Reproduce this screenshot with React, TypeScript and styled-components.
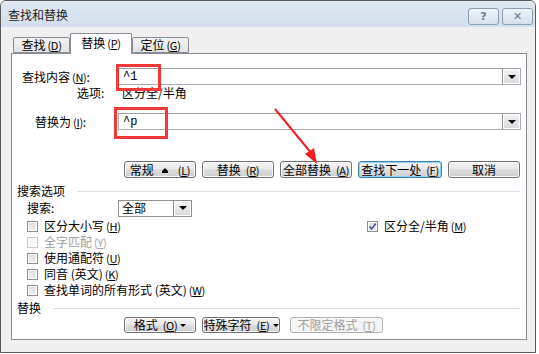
import React from "react";
import styled, { createGlobalStyle } from "styled-components";

const GlobalStyle = createGlobalStyle`
  body {
    margin: 0;
    background: #ffffff;
    font-family: "Noto Sans CJK SC", "Liberation Sans", sans-serif;
    font-size: 12px;
    color: #000;
  }
`;

const Window = styled.div`
  position: relative;
  width: 534px;
  height: 351px;
  border: 1px solid #5b5b5b;
  border-radius: 6px 6px 0 0;
  background: #f0f0f0;
  display: flex;
  flex-direction: column;
  overflow: hidden;
`;

const TitleBar = styled.div`
  height: 26px;
  display: flex;
  align-items: center;
  padding: 0 2px 0 7px;
  background: linear-gradient(#dfe8f3, #d3dfed);
`;

const Title = styled.div`
  flex: 1;
  font-size: 12px;
  color: #1e1e1e;
  line-height: 14px;
  padding-top: 2px;
`;

const CaptionButton = styled.div`
  width: 29px;
  height: 15px;
  margin-left: 3px;
  border: 1px solid #8c9cb0;
  border-radius: 3px;
  background: linear-gradient(#eef3f9, #d6e0ec);
  display: flex;
  align-items: center;
  justify-content: center;
  color: #6b7a8d;
  font-family: "DejaVu Sans", sans-serif;
  font-size: 11px;
  font-weight: bold;
  margin-top: 4px;
`;

const Body = styled.div`
  flex: 1;
  padding: 6px 8px 0 10px;
  display: flex;
  flex-direction: column;
`;

const TabStrip = styled.div`
  display: flex;
  align-items: flex-end;
  height: 20px;
  padding-left: 2px;
  position: relative;
  z-index: 1;
`;

const Tab = styled.div<{ $active?: boolean }>`
  height: ${(p) => (p.$active ? "21px" : "16px")};
  width: ${(p) => (p.$active ? "62px" : "57px")};
  margin-bottom: ${(p) => (p.$active ? "-1px" : "0")};
  border: 1px solid #898c95;
  border-bottom: ${(p) => (p.$active ? "none" : "1px solid #898c95")};
  border-radius: 2px 2px 0 0;
  background: ${(p) =>
    p.$active ? "#ffffff" : "linear-gradient(#f3f3f3, #e3e3e3)"};
  display: flex;
  align-items: center;
  justify-content: center;
  line-height: 14px;
  padding-bottom: ${(p) => (p.$active ? "3px" : "0")};
  box-sizing: border-box;
`;

const Panel = styled.div`
  height: 287px;
  border: 1px solid #898c95;
  background: #ffffff;
  display: flex;
  flex-direction: column;
  box-sizing: border-box;
`;

const FieldRow = styled.div<{ $top: number }>`
  display: flex;
  align-items: center;
  height: 17px;
  margin-top: ${(p) => p.$top}px;
`;

const LabelCell = styled.div<{ $indent: number }>`
  width: 106px;
  padding-left: ${(p) => p.$indent}px;
  box-sizing: border-box;
  white-space: nowrap;
  line-height: 14px;
`;

const Combo = styled.div`
  position: relative;
  width: 403px;
  height: 17px;
  border: 1px solid #abadb3;
  border-top-color: #9a9da5;
  box-sizing: border-box;
  display: flex;
  align-items: center;
  background: #fff;
`;

const ComboText = styled.span`
  flex: 1;
  padding-left: 4px;
  font-family: "Liberation Mono", "DejaVu Sans Mono", monospace;
  font-size: 12px;
  line-height: 14px;
`;

const DropButton = styled.div`
  width: 17px;
  height: 15px;
  border-left: 1px solid #8f8f8f;
  background: linear-gradient(#f4f4f4, #d9d9d9);
  display: flex;
  align-items: center;
  justify-content: center;
  box-shadow: inset 0 0 0 1px #ffffff;
`;

const DownTriangle = styled.span<{ $size?: number }>`
  width: 0;
  height: 0;
  border-left: ${(p) => p.$size ?? 4}px solid transparent;
  border-right: ${(p) => p.$size ?? 4}px solid transparent;
  border-top: ${(p) => p.$size ?? 4}px solid #000;
`;

const RedMark = styled.div<{ $l: number; $t: number; $w: number; $h: number }>`
  position: absolute;
  left: ${(p) => p.$l}px;
  top: ${(p) => p.$t}px;
  width: ${(p) => p.$w}px;
  height: ${(p) => p.$h}px;
  border: 3px solid #f03a3a;
  box-sizing: border-box;
  pointer-events: none;
`;

const OptionRow = styled.div`
  display: flex;
  height: 12px;
  margin-top: 2px;
  align-items: center;
  line-height: 12px;
  white-space: nowrap;
`;

const OptionValue = styled.span`
  padding-left: 4px;
`;

const ButtonRow = styled.div<{ $top: number }>`
  display: flex;
  gap: 6px;
  margin-top: ${(p) => p.$top}px;
  padding-left: 112px;
`;

const Button = styled.div<{
  $w: number;
  $h?: number;
  $focus?: boolean;
  $disabled?: boolean;
  $shift?: number;
}>`
  width: ${(p) => p.$w}px;
  height: ${(p) => p.$h ?? 17}px;
  margin-left: ${(p) => p.$shift ?? 0}px;
  box-sizing: border-box;
  border: 1px solid
    ${(p) => (p.$focus ? "#3c7fb1" : p.$disabled ? "#adb2b5" : "#707070")};
  border-radius: 3px;
  background: ${(p) =>
    p.$disabled
      ? "#f4f4f4"
      : "linear-gradient(#f2f2f2 0%, #ebebeb 45%, #dddddd 50%, #cfcfcf 100%)"};
  box-shadow: ${(p) =>
    p.$focus ? "inset 0 0 0 1px #8fd0f5" : "inset 0 0 0 1px #fbfbfb"};
  color: ${(p) => (p.$disabled ? "#a0a0a0" : "#000")};
  display: flex;
  align-items: center;
  justify-content: center;
  gap: 3px;
  line-height: 14px;
  white-space: nowrap;
`;

const Caret = styled.span`
  width: 0;
  height: 0;
  margin: 0 5px;
  border-left: 3px solid transparent;
  border-right: 3px solid transparent;
  border-bottom: 3px solid #000;
  box-shadow: 0 2px 0 -0px #000;
`;

const SectionHeader = styled.div<{ $top: number }>`
  display: flex;
  align-items: center;
  gap: 12px;
  height: 12px;
  line-height: 12px;
  margin-top: ${(p) => p.$top}px;
  padding-left: 5px;
  padding-right: 6px;
`;

const SectionLine = styled.div`
  flex: 1;
  height: 1px;
  background: #d5dfe5;
`;

const SearchRow = styled.div`
  display: flex;
  align-items: center;
  height: 16px;
  margin-top: 3px;
`;

const Select = styled.div`
  width: 74px;
  height: 17px;
  border: 1px solid #8f8f8f;
  box-sizing: border-box;
  display: flex;
  align-items: center;
  background: #fff;
`;

const SelectText = styled.span`
  flex: 1;
  padding-left: 3px;
  line-height: 14px;
`;

const CheckGrid = styled.div`
  display: grid;
  grid-template-columns: 340px 1fr;
  grid-auto-rows: 16px;
  margin-top: 2px;
  padding-left: 15px;
`;

const CheckItem = styled.div<{ $disabled?: boolean }>`
  display: flex;
  align-items: center;
  gap: 6px;
  white-space: nowrap;
  line-height: 14px;
  color: ${(p) => (p.$disabled ? "#a0a0a0" : "#000")};
`;

const Box = styled.span<{ $disabled?: boolean }>`
  width: 11px;
  height: 11px;
  box-sizing: border-box;
  border: 1px solid ${(p) => (p.$disabled ? "#c8c8c8" : "#8e8f8f")};
  background: ${(p) =>
    p.$disabled ? "#f6f6f6" : "linear-gradient(135deg, #dcdcdc, #f4f4f4)"};
  box-shadow: inset 0 0 0 1px #ffffff;
  display: flex;
  align-items: center;
  justify-content: center;
`;

const MnText = styled.span`
  font-size: 11px;
  margin-left: 2px;
  letter-spacing: -0.3px;
`;

const Arrow = styled.svg`
  position: absolute;
  left: 0;
  top: 0;
  pointer-events: none;
`;

const Mn = ({ k }: { k: string }) => (
  <MnText>
    (<u>{k}</u>)
  </MnText>
);

const Check = ({
  label,
  checked,
  disabled,
}: {
  label: React.ReactNode;
  checked?: boolean;
  disabled?: boolean;
}) => (
  <CheckItem $disabled={disabled}>
    <Box $disabled={disabled}>
      {checked && (
        <svg width="9" height="9" viewBox="0 0 9 9">
          <path
            d="M1.5 4.5 L3.6 7 L7.8 1.5"
            fill="none"
            stroke="#3c4fa0"
            strokeWidth="1.6"
          />
        </svg>
      )}
    </Box>
    <span>{label}</span>
  </CheckItem>
);

export default function App() {
  return (
    <>
      <GlobalStyle />
      <Window>
        <TitleBar>
          <Title>查找和替换</Title>
          <CaptionButton>?</CaptionButton>
          <CaptionButton>✕</CaptionButton>
        </TitleBar>
        <Body>
          <TabStrip>
            <Tab>
              查找<Mn k="D" />
            </Tab>
            <Tab $active>
              替换<Mn k="P" />
            </Tab>
            <Tab>
              定位<Mn k="G" />
            </Tab>
          </TabStrip>
          <Panel>
            <FieldRow $top={14}>
              <LabelCell $indent={10}>
                查找内容<Mn k="N" />:
              </LabelCell>
              <Combo>
                <ComboText>^1</ComboText>
                <DropButton>
                  <DownTriangle />
                </DropButton>
                <RedMark $l={-3} $t={-5} $w={45} $h={27} />
              </Combo>
            </FieldRow>
            <OptionRow>
              <LabelCell $indent={65}>选项:</LabelCell>
              <OptionValue>区分全/半角</OptionValue>
            </OptionRow>
            <FieldRow $top={14}>
              <LabelCell $indent={23}>
                替换为<Mn k="I" />:
              </LabelCell>
              <Combo>
                <ComboText>^p</ComboText>
                <DropButton>
                  <DownTriangle />
                </DropButton>
                <RedMark $l={-5} $t={-7} $w={54} $h={32} />
              </Combo>
            </FieldRow>
            <ButtonRow $top={31}>
              <Button $w={72}>
                常规<Caret />
                <Mn k="L" />
              </Button>
              <Button $w={72}>
                替换<Mn k="R" />
              </Button>
              <Button $w={72}>
                全部替换<Mn k="A" />
              </Button>
              <Button $w={84} $focus>
                查找下一处<Mn k="F" />
              </Button>
              <Button $w={72}>取消</Button>
            </ButtonRow>
            <SectionHeader $top={7}>
              搜索选项
              <SectionLine />
            </SectionHeader>
            <SearchRow>
              <LabelCell $indent={15}>搜索:</LabelCell>
              <Select>
                <SelectText>全部</SelectText>
                <DropButton>
                  <DownTriangle />
                </DropButton>
              </Select>
            </SearchRow>
            <CheckGrid>
              <Check label={<>区分大小写<Mn k="H" /></>} />
              <Check checked label={<>区分全/半角<Mn k="M" /></>} />
              <Check disabled label={<>全字匹配<Mn k="Y" /></>} />
              <span />
              <Check label={<>使用通配符<Mn k="U" /></>} />
              <span />
              <Check label={<>同音 (英文)<Mn k="K" /></>} />
              <span />
              <Check label={<>查找单词的所有形式 (英文)<Mn k="W" /></>} />
            </CheckGrid>
            <SectionHeader $top={4}>
              替换
              <SectionLine />
            </SectionHeader>
            <ButtonRow $top={3}>
              <Button $w={72} $h={16}>
                格式<Mn k="O" />
                <DownTriangle $size={3} />
              </Button>
              <Button $w={78} $h={16}>
                特殊字符<Mn k="E" />
                <DownTriangle $size={3} />
              </Button>
              <Button $w={93} $h={16} $disabled $shift={4}>
                不限定格式<Mn k="T" />
              </Button>
            </ButtonRow>
          </Panel>
        </Body>
        <Arrow width="536" height="352" viewBox="0 0 536 352">
          <line x1="274" y1="108" x2="311" y2="153" stroke="#f02020" strokeWidth="2" />
          <polygon points="316,163 304,153 313,147" fill="#f02020" />
        </Arrow>
      </Window>
    </>
  );
}
